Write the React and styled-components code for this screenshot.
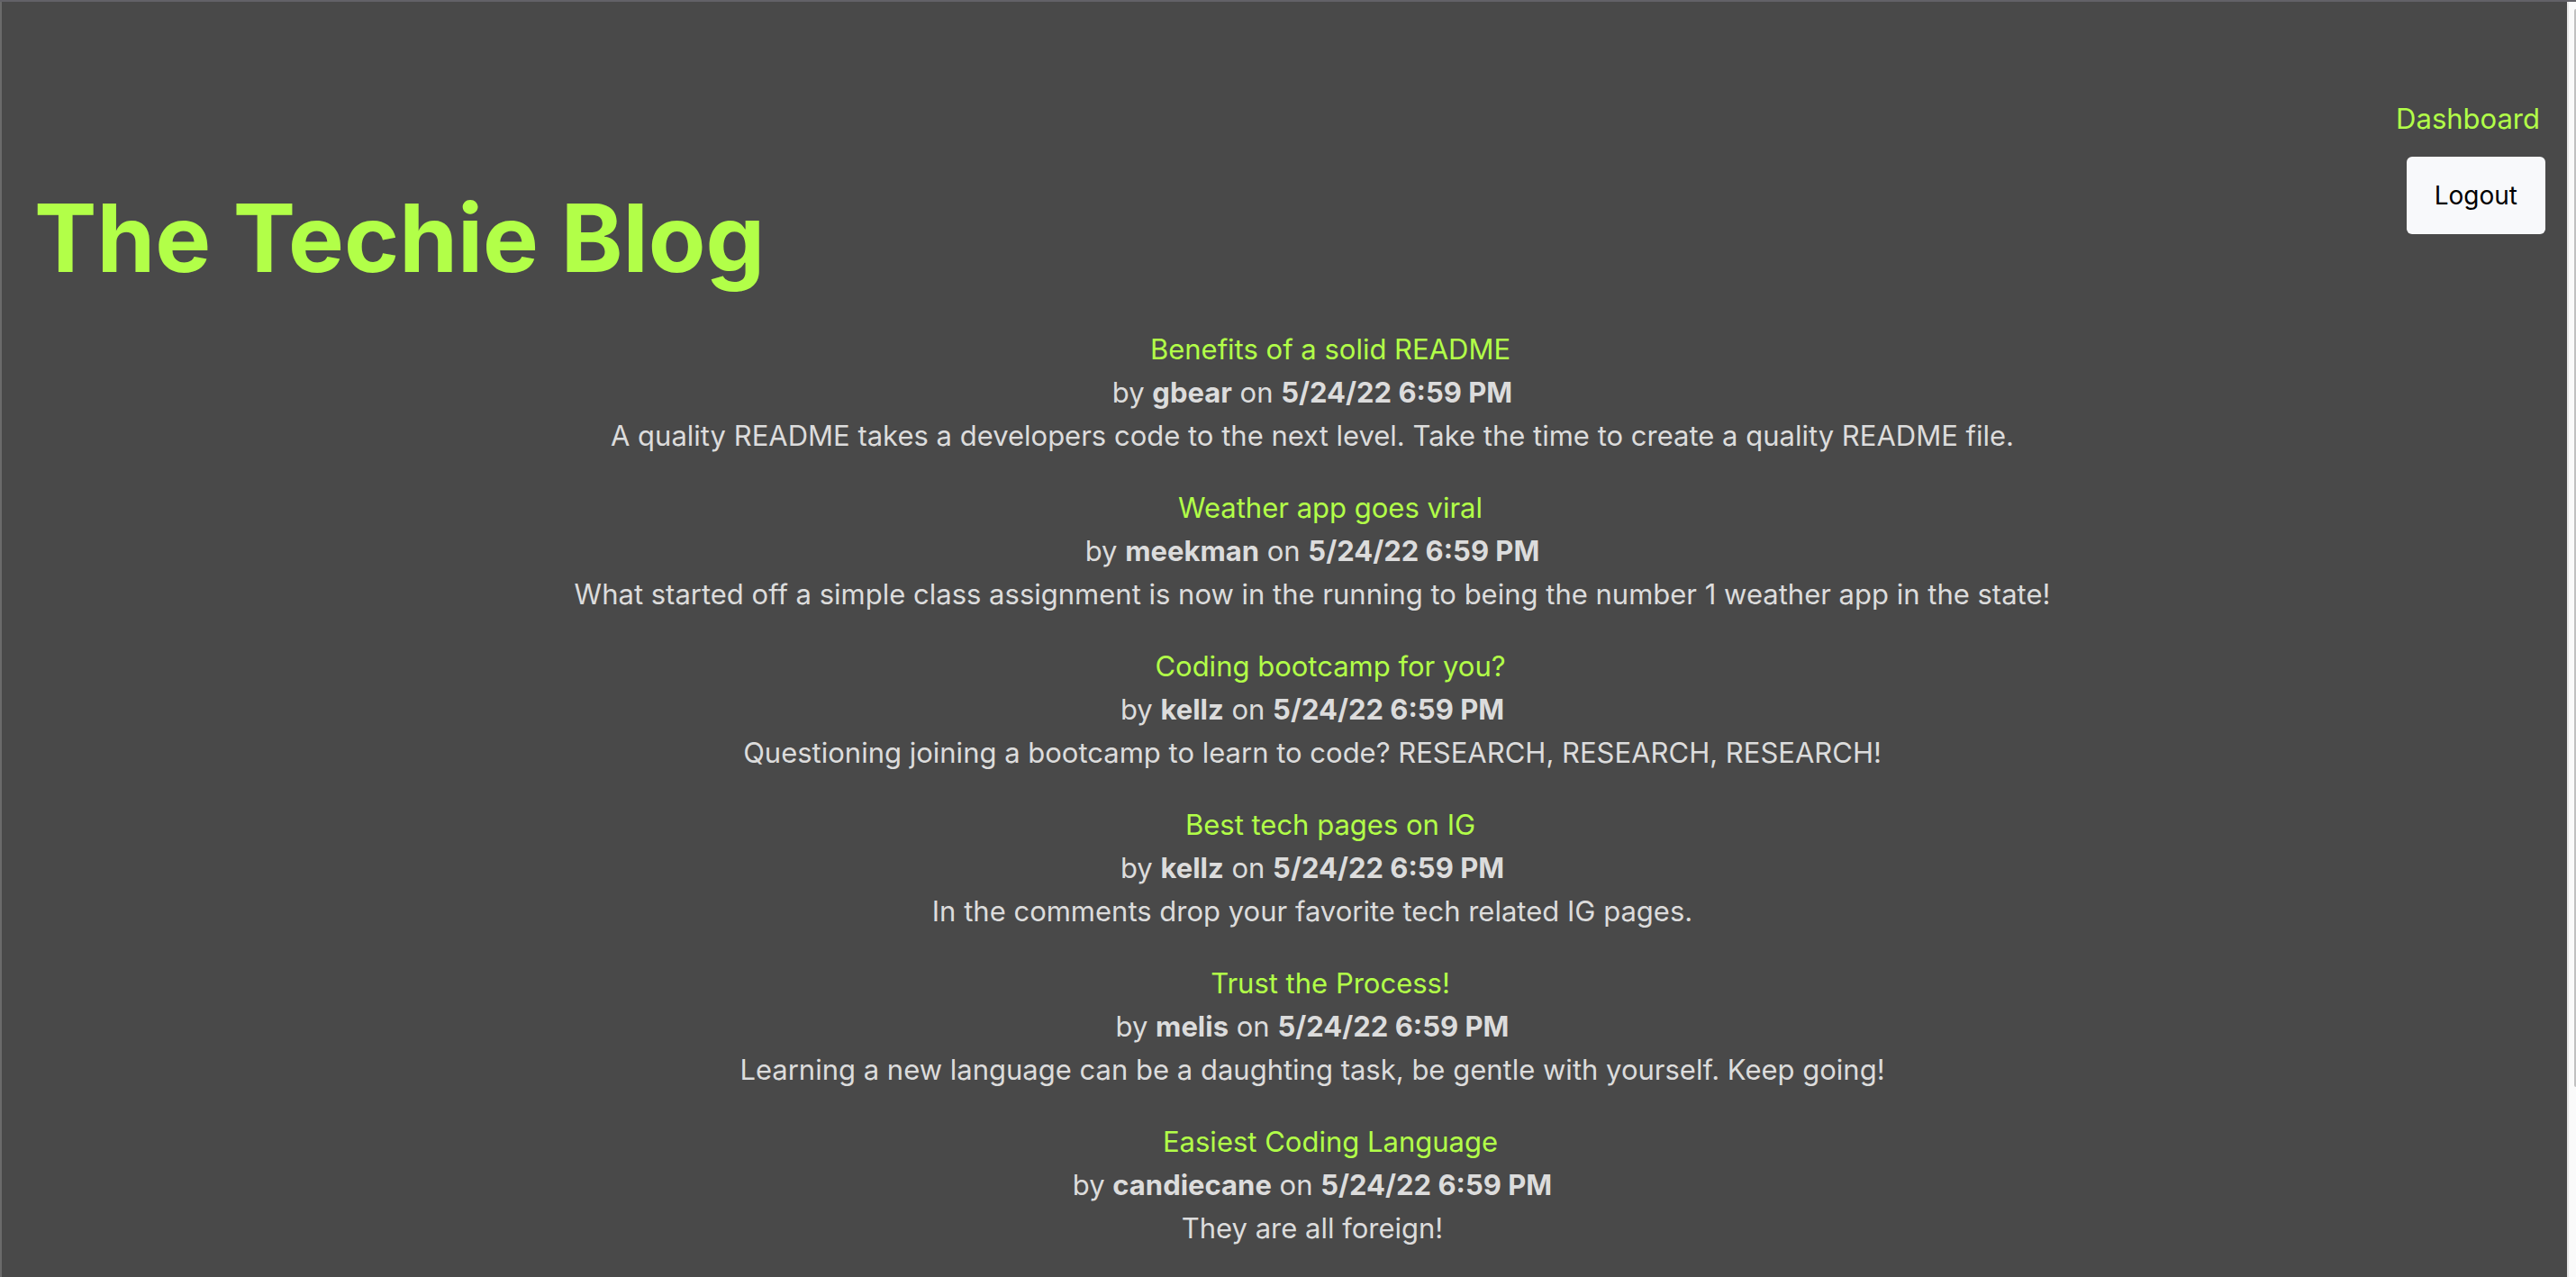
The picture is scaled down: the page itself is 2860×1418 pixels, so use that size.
import React from "react";
import styled, { createGlobalStyle } from "styled-components";

const lime = "#b2ff48";

const GlobalStyle = createGlobalStyle`
  * { box-sizing: border-box; }
  body {
    margin: 0;
    background: #494949;
    color: #dcdcdc;
    font-family: Inter, "Liberation Sans", sans-serif;
    font-size: 31px;
    line-height: 48px;
  }
`;

const Page = styled.div`
  display: flex;
  min-height: 100vh;
  border-top: 2px solid #626167;
`;

const Content = styled.div`
  flex: 1;
  min-width: 0;
  border-left: 2px solid #6a6a6a;
`;

const ScrollTrack = styled.div`
  display: grid;
  grid-template-rows: 17fr 3fr;
  width: 10px;
  padding: 8px 0 0 6px;
  background: #fafafa;
  border-left: 2px solid #e8e8e8;
`;

const ScrollThumb = styled.div`
  background: #c1c1c1;
  border-radius: 2px 0 0 2px;
`;

const Header = styled.header`
  display: flex;
  justify-content: space-between;
  align-items: flex-start;
  padding: 106px 24px 0 36px;
`;

const Title = styled.h1`
  margin: 90px 0 0;
  color: ${lime};
  font-size: 104px;
  line-height: 132px;
  font-weight: 700;
`;

const Nav = styled.nav`
  display: flex;
  flex-direction: column;
  align-items: flex-end;
  gap: 18px;
`;

const Link = styled.a`
  color: ${lime};
  text-decoration: none;
`;

const NavLink = styled(Link)`
  padding-right: 6px;
`;

const LogoutButton = styled.button`
  padding: 19px 31px;
  border: 0;
  border-radius: 6px;
  background: #f8f9fb;
  color: #000;
  font: inherit;
  font-size: 28px;
`;

const Posts = styled.main`
  display: flex;
  flex-direction: column;
  gap: 32px;
  padding: 34px 24px 24px 86px;
  text-align: center;
`;

const Post = styled.article`
  p { margin: 0; }
`;

const PostTitle = styled.h2`
  margin: 0;
  padding-left: 40px;
  font-size: inherit;
  font-weight: 400;
`;

const posts = [
  ["Benefits of a solid README", "gbear", "A quality README takes a developers code to the next level. Take the time to create a quality README file."],
  ["Weather app goes viral", "meekman", "What started off a simple class assignment is now in the running to being the number 1 weather app in the state!"],
  ["Coding bootcamp for you?", "kellz", "Questioning joining a bootcamp to learn to code? RESEARCH, RESEARCH, RESEARCH!"],
  ["Best tech pages on IG", "kellz", "In the comments drop your favorite tech related IG pages."],
  ["Trust the Process!", "melis", "Learning a new language can be a daughting task, be gentle with yourself. Keep going!"],
  ["Easiest Coding Language", "candiecane", "They are all foreign!"],
];

export default function App() {
  return (
    <>
      <GlobalStyle />
      <Page>
        <Content>
          <Header>
            <Title>The Techie Blog</Title>
            <Nav>
              <NavLink href="#dashboard">Dashboard</NavLink>
              <LogoutButton type="button">Logout</LogoutButton>
            </Nav>
          </Header>
          <Posts>
            {posts.map(([title, author, text]) => (
              <Post key={title}>
                <PostTitle><Link href="#post">{title}</Link></PostTitle>
                <p>by <b>{author}</b> on <b>5/24/22 6:59 PM</b></p>
                <p>{text}</p>
              </Post>
            ))}
          </Posts>
        </Content>
        <ScrollTrack>
          <ScrollThumb />
        </ScrollTrack>
      </Page>
    </>
  );
}
